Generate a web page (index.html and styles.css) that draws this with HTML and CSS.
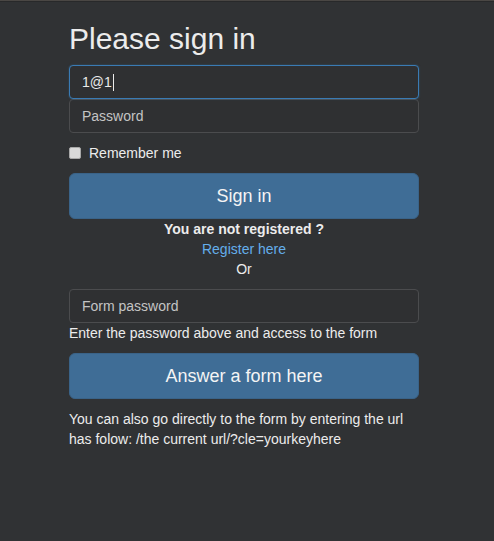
FILE: index.html
```html
<!DOCTYPE html>
<html>
<head>
<meta charset="utf-8">
<link rel="stylesheet" href="styles.css">
</head>
<body>
<div class="topline"></div>
<main class="wrap">
  <form class="signin">
    <h2 class="title">Please sign in</h2>
    <div class="field-group">
      <div class="input input-focus">1@1<span class="caret"></span></div>
      <div class="input placeholder">Password</div>
    </div>
    <label class="check"><span class="box"></span>Remember me</label>
    <div class="btn">Sign in</div>
    <div class="center bold">You are not registered ?</div>
    <div class="center"><a class="link">Register here</a></div>
    <div class="center">Or</div>
    <div class="input placeholder form-pass">Form password</div>
    <div class="help">Enter the password above and access to the form</div>
    <div class="btn">Answer a form here</div>
    <p class="note">You can also go directly to the form by entering the url has folow: /the current url/?cle=yourkeyhere</p>
  </form>
</main>
</body>
</html>
```
FILE: styles.css
```css
html, body {
  margin: 0;
  padding: 0;
  background: #303234;
  height: 100%;
}
body {
  font-family: "Liberation Sans", Arial, sans-serif;
  font-size: 14px;
  line-height: 20px;
  color: #ececec;
}
.topline {
  height: 1px;
  background: #4a4744;
  border-bottom: 1px solid #28292a;
}
.wrap {
  display: flex;
  padding-left: 69px;
}
.signin {
  width: 350px;
  display: flex;
  flex-direction: column;
}
.title {
  margin: 20px 0 10px;
  font-size: 30px;
  line-height: 33px;
  font-weight: normal;
  color: #ececec;
}
.field-group {
  display: flex;
  flex-direction: column;
}
.input {
  box-sizing: border-box;
  height: 34px;
  padding: 6px 12px;
  border: 1px solid #4b4c4e;
  border-radius: 4px;
  background: #2f3032;
  color: #eaeaea;
  font-size: 14px;
  line-height: 20px;
  display: flex;
  align-items: center;
}
.input-focus {
  border-color: #3a7bb4;
  box-shadow: 0 0 2px rgba(58, 123, 180, 0.5);
  position: relative;
  z-index: 1;
}
.placeholder {
  color: #c4c4c4;
}
.caret {
  display: inline-block;
  width: 1px;
  height: 17px;
  background: #eaeaea;
  margin-left: 1px;
}
.check {
  display: flex;
  align-items: center;
  margin: 10px 0;
  height: 20px;
}
.box {
  box-sizing: border-box;
  width: 12px;
  height: 12px;
  border: 1px solid #a8a8a8;
  border-radius: 2px;
  background: #d9d9d9;
  margin-right: 8px;
}
.btn {
  box-sizing: border-box;
  height: 46px;
  border-radius: 6px;
  border: 1px solid #3a6388;
  background: #3f6d96;
  color: #f4f4f4;
  font-size: 18px;
  display: flex;
  align-items: center;
  justify-content: center;
}
.center {
  text-align: center;
}
.bold {
  font-weight: bold;
}
.link {
  color: #64aeeb;
  text-decoration: none;
}
.form-pass {
  margin-top: 10px;
}
.help {
  margin-bottom: 10px;
}
.note {
  margin: 10px 0 0;
}
```
